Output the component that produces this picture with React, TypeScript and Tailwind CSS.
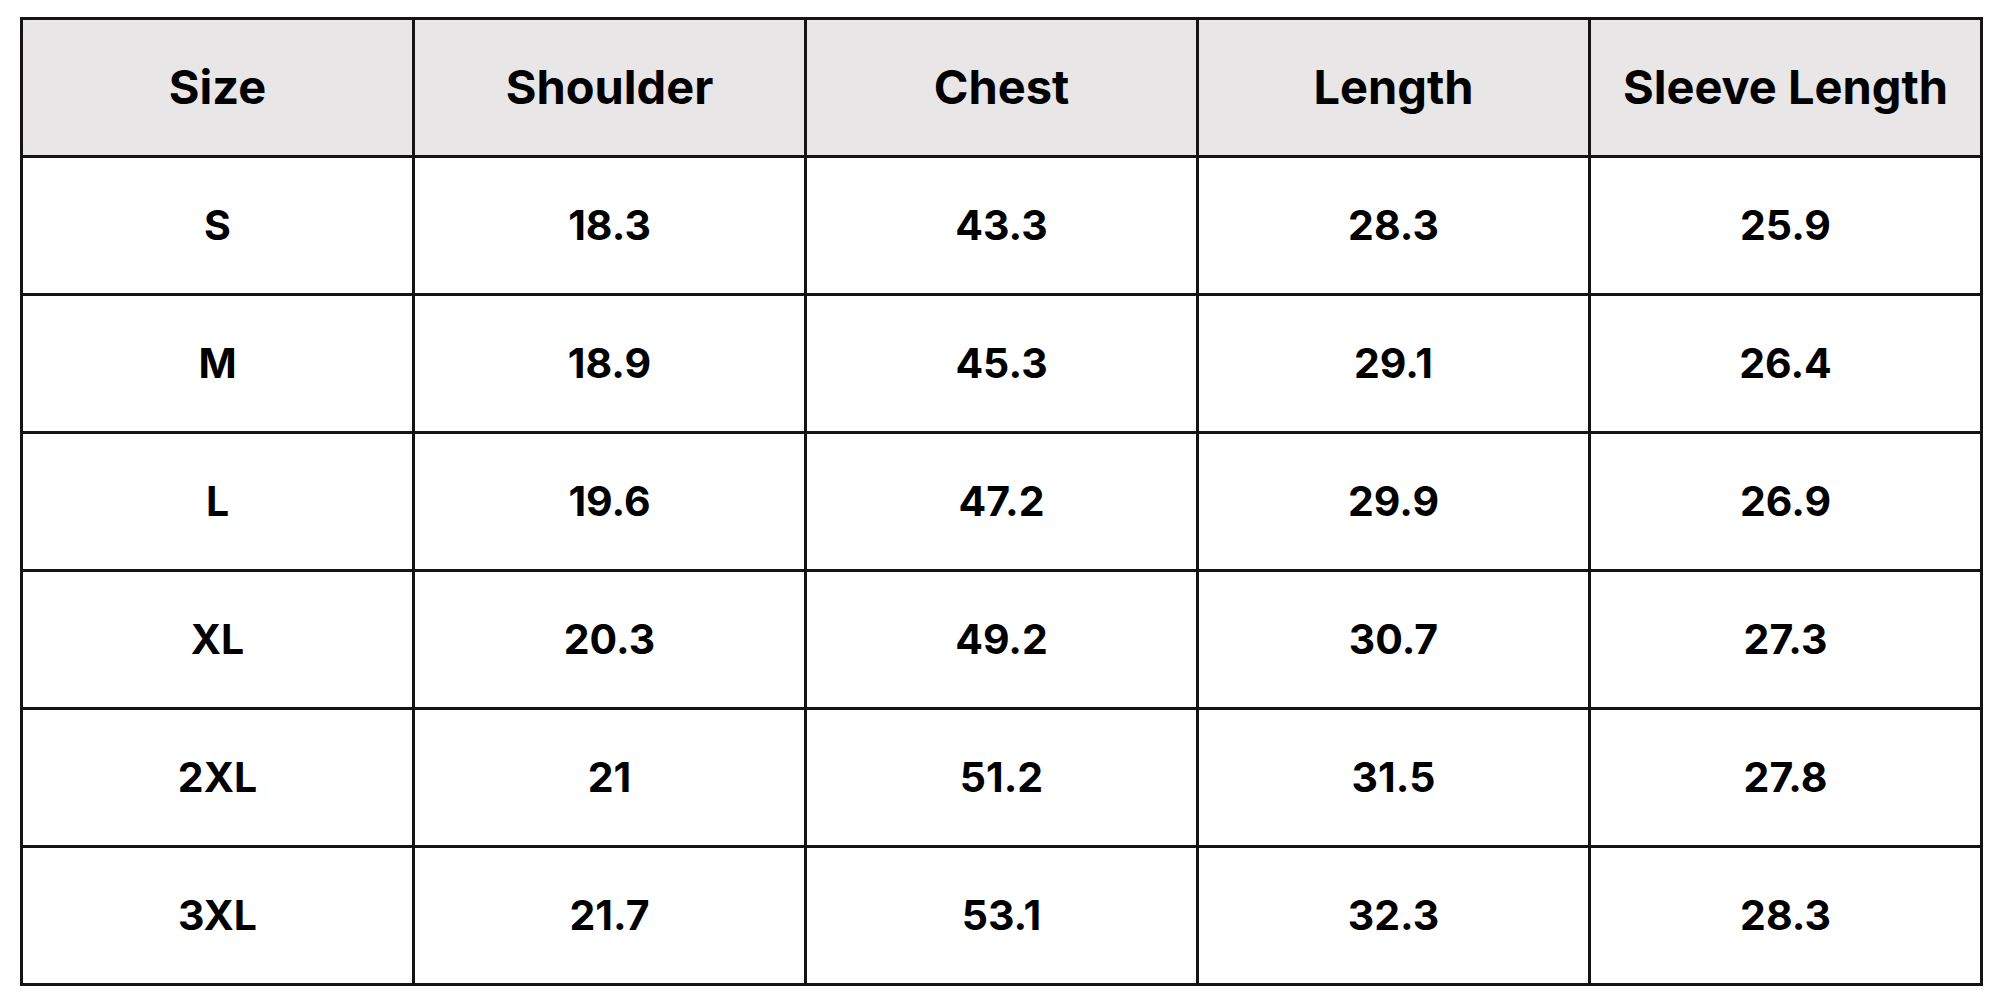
import React from "react";

const headers = ["Size", "Shoulder", "Chest", "Length", "Sleeve Length"];
const rows = [
  ["S", "18.3", "43.3", "28.3", "25.9"],
  ["M", "18.9", "45.3", "29.1", "26.4"],
  ["L", "19.6", "47.2", "29.9", "26.9"],
  ["XL", "20.3", "49.2", "30.7", "27.3"],
  ["2XL", "21", "51.2", "31.5", "27.8"],
  ["3XL", "21.7", "53.1", "32.3", "28.3"],
];

export default function App() {
  return (
    <div className="w-[2000px] h-[1000px] bg-white pt-[17px] pl-[20px]" style={{ fontFamily: "Inter, 'Noto Sans', sans-serif" }}>
      <div className="grid grid-cols-[repeat(5,392px)] w-[1963px] border-l-[3px] border-t-[3px] border-[#141414]">
        {headers.map((h) => (
          <div key={h} className="h-[138px] flex items-center justify-center bg-[#e8e6e7] border-r-[3px] border-b-[3px] border-[#141414] text-[47px] font-bold text-black">
            {h}
          </div>
        ))}
        {rows.map((r, i) =>
          r.map((c, j) => (
            <div key={i + "-" + j} className="h-[138px] flex items-center justify-center bg-white border-r-[3px] border-b-[3px] border-[#141414] text-[41px] font-bold text-black">
              {c}
            </div>
          ))
        )}
      </div>
    </div>
  );
}
